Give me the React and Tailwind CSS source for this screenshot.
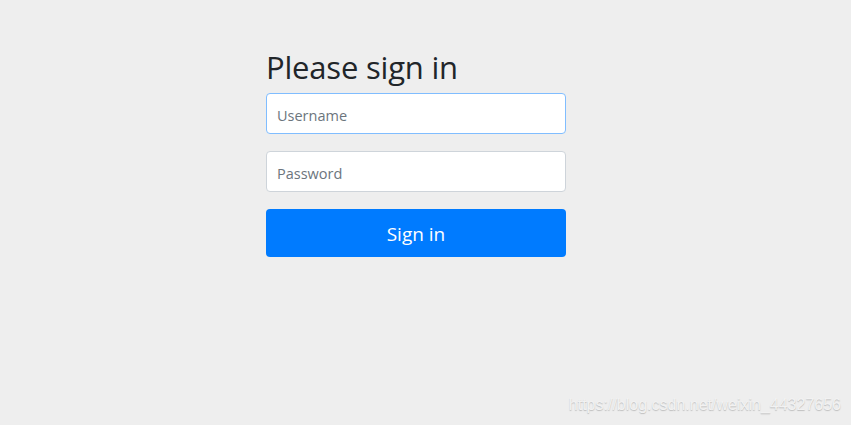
export default function App() {
  return (
    <div
      className="relative w-[851px] h-[425px] bg-[#eeeeee] overflow-hidden"
      style={{ fontFamily: '"Open Sans", "Noto Sans", sans-serif' }}
    >
      <form className="flex flex-col w-[300px] ml-[266px] pt-[47px]">
        {/* Heading */}
        <h2 className="text-[31px] leading-[40px] text-[#212529] mb-[6px] tracking-[-0.2px]">
          Please sign in
        </h2>

        {/* Username */}
        <input
          type="text"
          placeholder="Username"
          className="h-[41px] px-[10px] pt-[3px] bg-white border border-[#80bdff] rounded-[4px] text-[14.5px] text-[#495057] placeholder:text-[#6c757d] outline-none"
        />

        {/* Password */}
        <input
          type="password"
          placeholder="Password"
          className="h-[41px] mt-[17px] px-[10px] pt-[3px] bg-white border border-[#ced4da] rounded-[4px] text-[14.5px] text-[#495057] placeholder:text-[#6c757d] outline-none"
        />

        {/* Submit */}
        <button
          type="button"
          className="h-[48px] mt-[17px] pt-[3px] bg-[#007bff] text-white text-[19px] rounded-[4px]"
        >
          Sign in
        </button>
      </form>

      {/* Watermark */}
      <div
        className="absolute right-[10px] bottom-[8px] text-[16px] text-[#f2f2f2]"
        style={{ fontFamily: '"Liberation Sans", Arial, sans-serif', textShadow: '0 1px 1px #bdbdbd' }}
      >
        https://blog.csdn.net/weixin_44327656
      </div>
    </div>
  );
}
